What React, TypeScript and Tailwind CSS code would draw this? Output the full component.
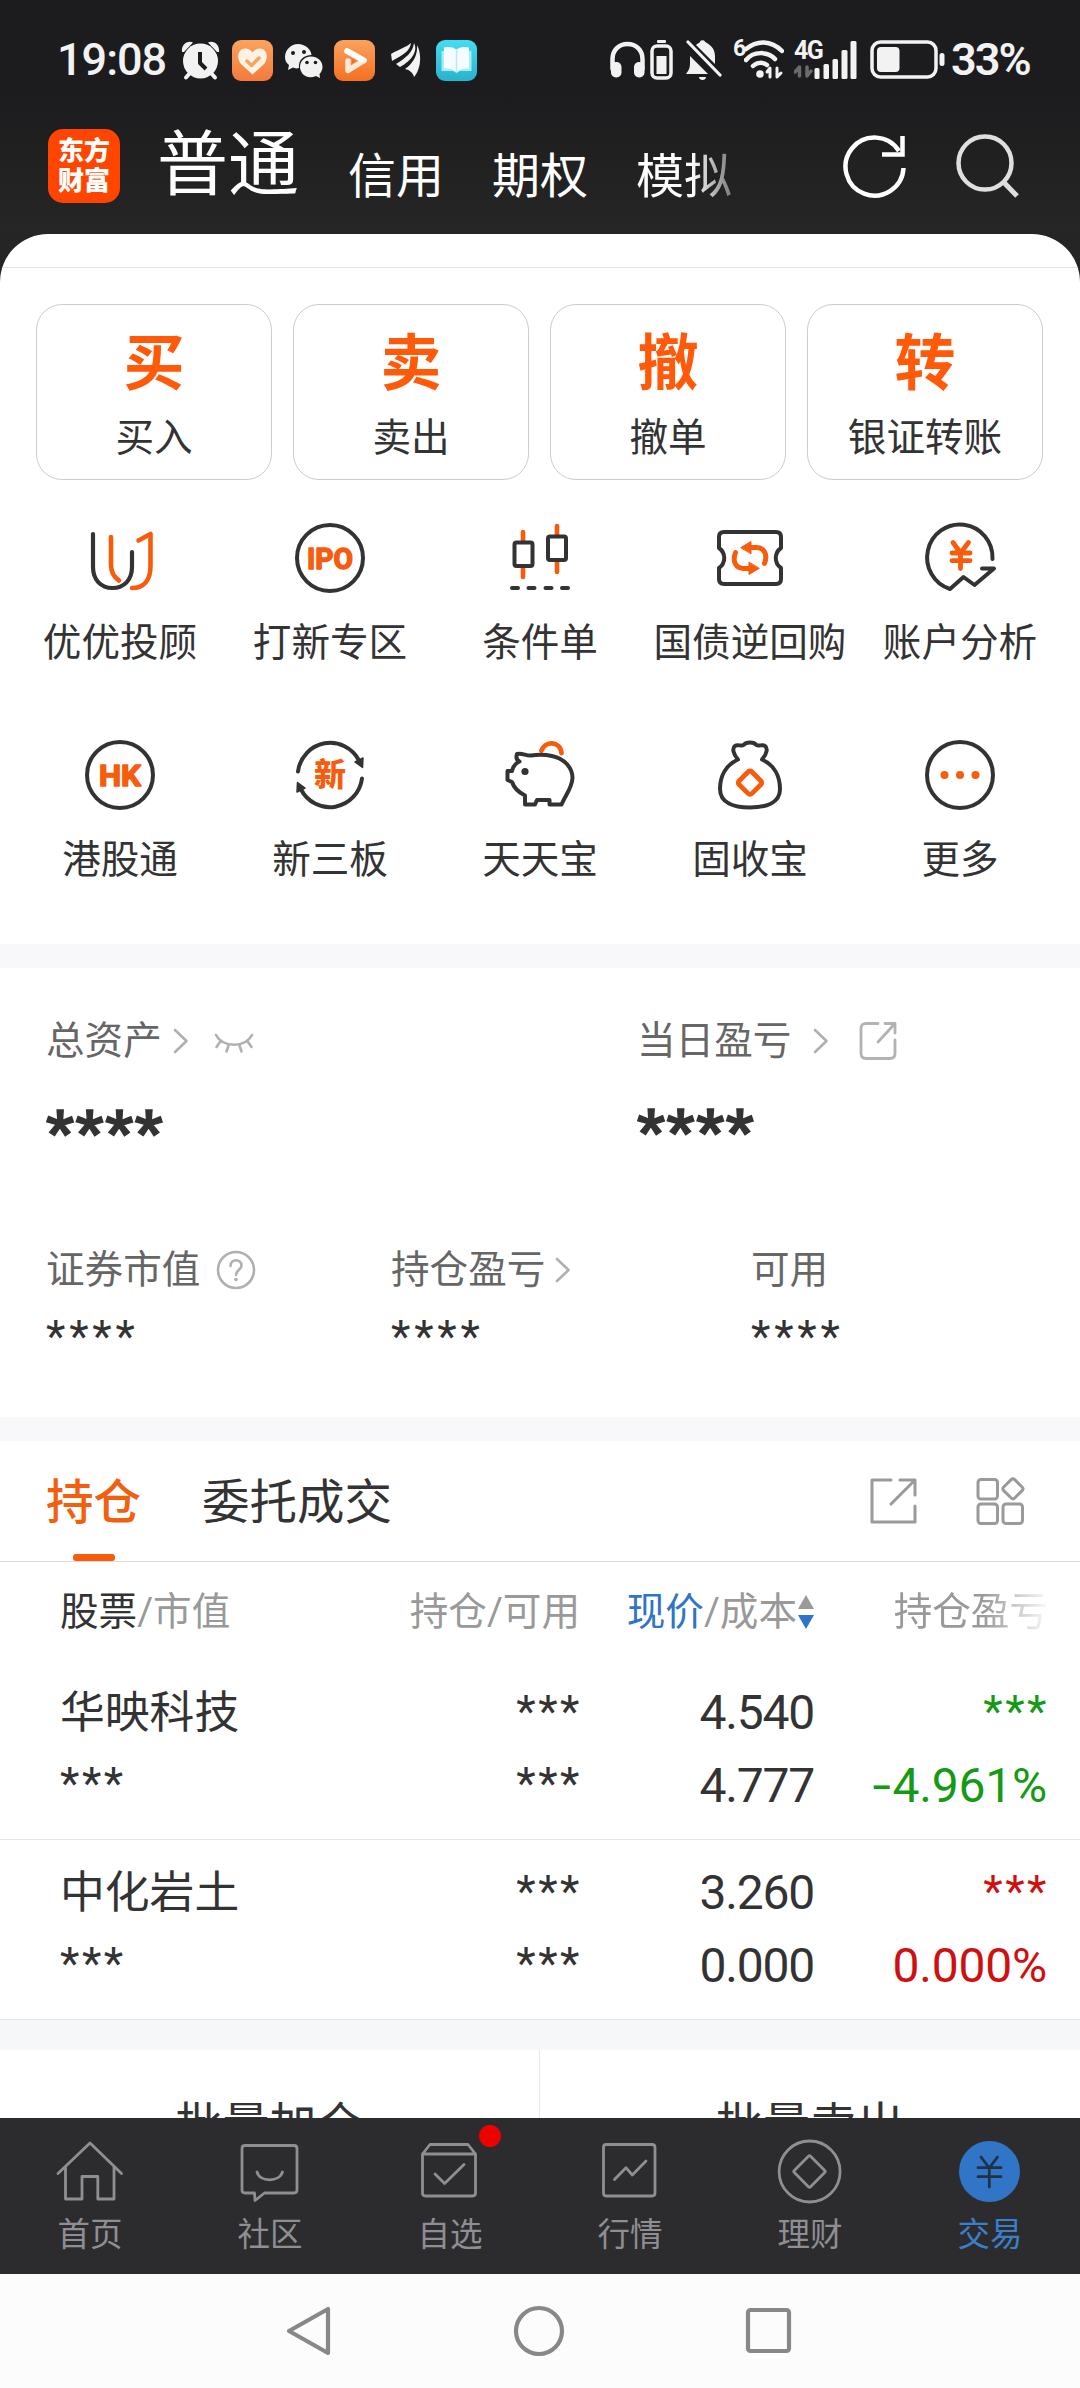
import type { ReactNode } from "react";
import clsx from "clsx";

const INK = "#333333";
const ORANGE = "#f75c0c";

const ACCOUNT_TABS = ["信用", "期权"];

const QUICK_ACTIONS = [
  { glyph: "买", label: "买入" },
  { glyph: "卖", label: "卖出" },
  { glyph: "撤", label: "撤单" },
  { glyph: "转", label: "银证转账" }
];

const HOLDINGS = [
  { name: "华映科技", price: "4.540", cost: "4.777", sign: "-", rate: "4.961%", tone: "text-[#149a14]" },
  { name: "中化岩土", price: "3.260", cost: "0.000", sign: "", rate: "0.000%", tone: "text-[#cf1010]" }
];

function Svg({ w, h, className, children }: { w: number; h: number; className?: string; children: ReactNode }) {
  return (
    <svg
      width={w}
      height={h}
      viewBox={`0 0 ${w} ${h}`}
      fill="none"
      strokeLinecap="round"
      strokeLinejoin="round"
      className={clsx("block shrink-0", className)}
      aria-hidden
    >
      {children}
    </svg>
  );
}

function StatusBar() {
  return (
    <div className="flex h-[120px] items-center pl-[57px] text-[#f2f2f2]">
      <span className="w-[124px] text-[45px] font-medium leading-[46px] tracking-[-1px]">19:08</span>

      <Svg w={40} h={42}>
        <g fill="#f2f2f2">
          <circle cx="19.5" cy="22" r="17.5" />
          <path d="M1 13C0 5 7 1 12 3.500L3 13ZM38 13C39 5 32 1 27 3.500L36 13Z" />
        </g>
        <path d="M9 34L5 38.500M30 34L34 38.500" stroke="#f2f2f2" strokeWidth="4" />
        <path d="M19 13V24L25 30" stroke="#1c1c1e" strokeWidth="4" strokeLinecap="butt" />
      </Svg>

      <Svg w={41} h={41} className="ml-[11px]">
        <defs>
          <linearGradient id="warm" x1="0" y1="0" x2="0" y2="1">
            <stop stopColor="#fca35c" />
            <stop offset="1" stopColor="#f47a3c" />
          </linearGradient>
        </defs>
        <rect width="41" height="41" rx="9" fill="url(#warm)" />
        <path d="M20.500 34.500L9 24C4 18 6 9 13 8.500C17 8.500 19.500 11 20.500 12.500C21.500 11 24 8.500 28 8.500C35 9 37 18 32 24Z" fill="#fff3e6" />
        <path d="M15 21L19.500 25.500L27 18" stroke="#f9a35c" strokeWidth="3.500" />
      </Svg>

      <Svg w={40} h={36} className="ml-[11px]">
        <g fill="#f2f2f2">
          <path d="M14 2C21 2 27 7 27.500 13C20 13 14 18 15 26C12 27 10 26 9 25.500L4 28L5 23C2 21 1 18 1 15C1 8 7 2 14 2Z" />
          <path d="M27 14.500C33.500 14.500 38.500 19 38.500 25C38.500 28 37 30.500 35.500 32L36 36L32 34C22 38 16 31 16 25C16 19 21 14.500 27 14.500Z" />
        </g>
        <g fill="#1c1c1e">
          <circle cx="9" cy="11" r="2" />
          <circle cx="20" cy="10" r="2" />
          <circle cx="23" cy="20.500" r="1.800" />
          <circle cx="31.500" cy="20.500" r="1.800" />
        </g>
      </Svg>

      <Svg w={41} h={41} className="ml-[10px]">
        <defs>
          <linearGradient id="hot" x1="0" y1="0" x2="0" y2="1">
            <stop stopColor="#fba260" />
            <stop offset="1" stopColor="#f5701f" />
          </linearGradient>
        </defs>
        <rect width="41" height="41" rx="9" fill="url(#hot)" />
        <path d="M13 11L30 20.500L14 30.500V21" stroke="#ffe9d8" strokeWidth="5.500" />
        <path d="M13 11L30 20.500" stroke="#ffffff" strokeWidth="5.500" />
        <path d="M18 18.500L22 21L18 23.500Z" fill="#f5701f" />
      </Svg>

      <Svg w={30} h={36} className="ml-[16px]">
        <g fill="#f2f2f2">
          <path d="M0 12C8 7 14 6 20 1C19 9 12 13 1 19Z" />
          <path d="M5 22C15 16 22 10 23 1C27 8 22 18 9 25Z" />
          <path d="M14 27C21 22 27 14 26 3C31 12 30 27 23 35C22 31 19 28 14 27Z" />
        </g>
      </Svg>

      <Svg w={41} h={41} className="ml-[15px]">
        <defs>
          <linearGradient id="aqua" x1="0" y1="0" x2="0" y2="1">
            <stop stopColor="#45dcf2" />
            <stop offset="1" stopColor="#26b4cb" />
          </linearGradient>
        </defs>
        <rect width="41" height="41" rx="9" fill="url(#aqua)" />
        <path d="M5.500 11H35.500V31H24L20.500 33L17 31H5.500Z" fill="#a8ebf4" />
        <path d="M20.500 9.500C17 6.500 12 6.500 8 7.500V28.500C13 28 17 29 20.500 32C24 29 28 28 33 28.500V7.500C29 6.500 24 6.500 20.500 9.500Z" fill="#f4fcff" />
        <path d="M20.500 9.500V32" stroke="#bfe6f2" strokeWidth="1.500" />
      </Svg>

      <Svg w={36} h={38} className="ml-[133px]">
        <path d="M2.500 28V18C2.500 9 9 3 17.500 3S32.500 9 32.500 18V28" stroke="#f2f2f2" strokeWidth="4.500" />
        <rect x="1" y="21" width="10.500" height="15.500" rx="5" fill="#f2f2f2" />
        <rect x="24" y="21" width="10.500" height="15.500" rx="5" fill="#f2f2f2" />
      </Svg>
      <Svg w={23} h={42} className="ml-[4px]">
        <rect x="7" y="1" width="9" height="3" rx="1" fill="#f2f2f2" />
        <rect x="2" y="7" width="19" height="32" rx="5" stroke="#f2f2f2" strokeWidth="3.500" />
        <rect x="6.500" y="17" width="10" height="18" fill="#f2f2f2" />
      </Svg>
      <Svg w={36} h={42} className="ml-[13px]">
        <g fill="#f2f2f2">
          <path d="M0 35C3 31 4 29 4 24V17L22 35Z" />
          <path d="M10 6C12 4 14 4 14 2.500A3 3 0 0 1 19 2.500C19 4 29 6 29 17V25Z" />
          <path d="M13 38H20C20 42 13 42 13 38Z" />
        </g>
        <path d="M2 3L34 36" stroke="#f2f2f2" strokeWidth="3.200" />
      </Svg>
      <div className="ml-[11px] flex h-[42px] w-[52px] items-start">
        <span className="w-[11px] text-[23px] font-bold leading-[20px]">6</span>
        <Svg w={40} h={42}>
          <g stroke="#f2f2f2" strokeWidth="4.500">
            <path d="M2 10C13 1 27 1 38 12" />
            <path d="M2 21C9 12 24 12 31 20" />
            <path d="M9 27C13 23 19 23 23 26" />
          </g>
          <circle cx="16" cy="35" r="3.800" fill="#f2f2f2" />
          <path d="M26 38V29L23 33M33 29V38L37 34" stroke="#f2f2f2" strokeWidth="3" />
        </Svg>
      </div>
      <div className="ml-[9px] flex h-[42px] w-[63px] items-start">
        <div className="w-[20px]">
          <div className="text-[25px] font-bold leading-[24px] tracking-[-1.5px]">4G</div>
          <Svg w={19} h={18}>
            <path d="M5.500 13V4L1 9M13 4V13L17 8" stroke="#6a6a6c" strokeWidth="3.500" />
          </Svg>
        </div>
        <Svg w={43} h={42}>
          <g fill="#f2f2f2">
            <rect x="0.500" y="29" width="5" height="11" rx="1.500" />
            <rect x="9.500" y="25" width="5.500" height="15" rx="1.500" />
            <rect x="18.500" y="20" width="5.500" height="20" rx="1.500" />
            <rect x="27.500" y="11" width="6" height="29" rx="1.500" />
            <rect x="36.500" y="2" width="6" height="38" rx="1.500" />
          </g>
        </Svg>
      </div>
      <Svg w={76} h={40} className="ml-[13px]">
        <rect x="2" y="2" width="64" height="35" rx="8.500" stroke="#f2f2f2" strokeWidth="3.500" />
        <rect x="7" y="7" width="22.500" height="25" rx="4" fill="#f2f2f2" />
        <rect x="69.500" y="13" width="5" height="13" rx="2.500" fill="#f2f2f2" />
      </Svg>
      <span className="ml-[5px] text-[45px] font-semibold leading-[46px] tracking-[-2px]">33%</span>
    </div>
  );
}

function Header() {
  return (
    <div className="flex h-[92px] items-center pl-[48px] text-white">
      <div className="flex h-[74px] w-[72px] flex-col items-center justify-center rounded-[15px] bg-[#ff4500] text-[26px] font-black leading-[30px]">
        <span>东方</span>
        <span>财富</span>
      </div>
      <span className="mb-[2px] ml-[37px] text-[71px] leading-[72px]">普通</span>
      <div className="ml-[49px] flex gap-[48px] pt-[21px] text-[48px] leading-[48px]">
        {ACCOUNT_TABS.map((tab) => (
          <span key={tab}>{tab}</span>
        ))}
        <span className="[mask-image:linear-gradient(90deg,#000_58%,rgba(0,0,0,0.4)_100%)]">模拟</span>
      </div>
      <Svg w={66} h={68} className="ml-[110px]">
        <path d="M61.500 36A29 29 0 1 1 57 19" stroke="#ffffff" strokeWidth="4.500" strokeLinecap="butt" />
        <path d="M60.500 4V22.500H40" stroke="#ffffff" strokeWidth="4.500" strokeLinecap="butt" strokeLinejoin="miter" />
      </Svg>
      <Svg w={66} h={68} className="ml-[46px]">
        <circle cx="31" cy="31" r="26.500" stroke="#dfdfdf" strokeWidth="4.500" />
        <path d="M49.500 50L63 64" stroke="#dfdfdf" strokeWidth="5" strokeLinecap="butt" />
      </Svg>
    </div>
  );
}

function QuickActions() {
  return (
    <div className="flex gap-[21px] px-[36px] pt-[36px]">
      {QUICK_ACTIONS.map((action) => (
        <div
          key={action.label}
          className="flex h-[176px] w-[236px] flex-col items-center rounded-[26px] border border-[#cccccc] pt-[26px]"
        >
          <span className="text-[61px] font-bold leading-[66px] text-[#ff5a0a]">{action.glyph}</span>
          <span className="mt-[21px] text-[38.6px] leading-[40px]">{action.label}</span>
        </div>
      ))}
    </div>
  );
}

const RING = <circle cx="40" cy="40" r="33" stroke={INK} strokeWidth="4" />;

function IconAdvisor() {
  return (
    <Svg w={80} h={80}>
      <g strokeWidth="4.200">
        <path d="M13 16V49C13 62 21 70 32.500 70S52 62 52 49V34" stroke={INK} />
        <path d="M31 19V47C31 55 34 59 39 62.500M58.500 22.500L70.500 16V48C70.500 62 64 70 52 70" stroke={ORANGE} strokeWidth="4.600" />
      </g>
    </Svg>
  );
}

function IconRingText({ text, span }: { text: string; span: number }) {
  return (
    <Svg w={80} h={80}>
      {RING}
      <text
        x="40"
        y="50.500"
        textAnchor="middle"
        fontSize="30"
        fontWeight="700"
        textLength={span}
        lengthAdjust="spacingAndGlyphs"
        fill={ORANGE}
        stroke={ORANGE}
        strokeWidth="1.500"
      >
        {text}
      </text>
    </Svg>
  );
}

function IconCandles() {
  return (
    <Svg w={80} h={80}>
      <path d="M23 14V24M23 50V59M57 8V18M57 44V54" stroke={ORANGE} strokeWidth="4.600" />
      <g stroke={INK} strokeWidth="4">
        <rect x="14.500" y="24.500" width="18" height="23.500" rx="2" />
        <rect x="48" y="18.500" width="18" height="23.500" rx="2" />
        <path d="M12 70H18M28.500 70H34.500M45.500 70H51.500M62 70H68" />
      </g>
    </Svg>
  );
}

function IconRepo() {
  const arrow = (
    <>
      <path d="M40 29.500H46C54 29.500 58 36 54.500 45.500" stroke={ORANGE} strokeWidth="5" />
      <path d="M31 29.500L41 23.500V35.500Z" fill={ORANGE} stroke={ORANGE} strokeWidth="1" />
    </>
  );
  return (
    <Svg w={80} h={80}>
      <path
        d="M14 14H66Q71 14 71 19V30C64 35 64 45 71 50V61Q71 66 66 66H14Q9 66 9 61V50C16 45 16 35 9 30V19Q9 14 14 14Z"
        stroke={INK}
        strokeWidth="4"
      />
      {arrow}
      <g transform="rotate(180 40 40)">{arrow}</g>
    </Svg>
  );
}

function IconAnalysis() {
  return (
    <Svg w={80} h={80}>
      <path d="M72.500 41A32.700 33 0 1 0 30 71L43.500 59L54.500 67L74 50.500H62" stroke={INK} strokeWidth="4" />
      <path d="M33 24.500L40.500 35L48.500 24.500M32 35H50M32 42.700H50M40.500 35V50.500" stroke={ORANGE} strokeWidth="4.800" />
    </Svg>
  );
}

function IconNewBoard() {
  const half = (
    <>
      <path d="M8 36.500A32.500 33 0 0 1 69 25.500" stroke={INK} strokeWidth="4" />
      <path d="M65 27L73 23L72.500 32.500Z" fill={INK} stroke={INK} strokeWidth="1.500" />
    </>
  );
  return (
    <Svg w={80} h={80}>
      {half}
      <g transform="rotate(180 40 40)">{half}</g>
      <text x="40" y="51" textAnchor="middle" fontSize="32" fontWeight="900" fill={ORANGE}>
        新
      </text>
    </Svg>
  );
}

function IconPig() {
  return (
    <Svg w={80} h={80}>
      <path d="M41.500 15.500C45 5.500 60 5.500 61.500 18" stroke={ORANGE} strokeWidth="4.800" />
      <path
        d="M17 19C22 17.500 26 21 31 20.500C38 19.500 45 19.500 52 21C66 24 72.500 34 72.500 43C72 53 66 59 61.500 69.500H49.500V65H37L35 69.500H25V60.500C18 57 14 53 12 47L7.500 45V36H12C13 32 16 28 19.500 26.500C16.500 25 16 22 17 19Z"
        stroke={INK}
        strokeWidth="4"
      />
      <circle cx="25" cy="36.500" r="3.600" fill={INK} />
    </Svg>
  );
}

function IconBag() {
  return (
    <Svg w={80} h={80}>
      <path
        d="M28 24.500C23 19 22 13 25 11C28 8.500 31 12 33.500 10C36 6.500 44 6.500 46.500 10C49 12 52 8.500 55 11C58 13 57 19 52 24.500C64 30 70 41 70 54C70 68 56 72.500 40 72.500S10 68 10 54C10 41 16 30 28 24.500Z"
        stroke={INK}
        strokeWidth="4"
      />
      <rect x="31" y="38.700" width="18" height="18" rx="2.500" transform="rotate(45 40 47.700)" stroke={ORANGE} strokeWidth="4.800" />
    </Svg>
  );
}

function IconMore() {
  return (
    <Svg w={80} h={80}>
      {RING}
      <g fill={ORANGE}>
        <circle cx="24.500" cy="40" r="4" />
        <circle cx="40" cy="40" r="4" />
        <circle cx="55.500" cy="40" r="4" />
      </g>
    </Svg>
  );
}

const FEATURES: { label: string; icon: ReactNode }[] = [
  { label: "优优投顾", icon: <IconAdvisor /> },
  { label: "打新专区", icon: <IconRingText text="IPO" span={46} /> },
  { label: "条件单", icon: <IconCandles /> },
  { label: "国债逆回购", icon: <IconRepo /> },
  { label: "账户分析", icon: <IconAnalysis /> },
  { label: "港股通", icon: <IconRingText text="HK" span={42} /> },
  { label: "新三板", icon: <IconNewBoard /> },
  { label: "天天宝", icon: <IconPig /> },
  { label: "固收宝", icon: <IconBag /> },
  { label: "更多", icon: <IconMore /> }
];

function FeatureGrid() {
  return (
    <div className="grid grid-cols-5 px-[15px] pt-[38px]">
      {FEATURES.map((feature) => (
        <div key={feature.label} className="flex h-[217px] flex-col items-center">
          {feature.icon}
          <span className="mt-[25px] whitespace-nowrap text-[38.6px] leading-[40px]">{feature.label}</span>
        </div>
      ))}
    </div>
  );
}

function Chevron({ className }: { className?: string }) {
  return (
    <Svg w={16} h={26} className={className}>
      <path d="M2 2L13.500 13L2 24" stroke="#b0b0b0" strokeWidth="2.600" />
    </Svg>
  );
}

function Masked({ className }: { className?: string }) {
  return <div className={clsx("text-[#333]", className)}>****</div>;
}

function Assets() {
  return (
    <div className="h-[449px] bg-white pt-[53px] text-[38.6px] leading-[40px] text-[#666]">
      <div className="flex">
        <div className="w-[591px] pl-[46px]">
          <div className="flex h-[40px] items-center">
            总资产
            <Chevron className="ml-[11px]" />
            <Svg w={40} h={22} className="ml-[25px] mt-[4px]">
              <path d="M2 3C9 16 31 16 38 3M6 10L2.500 15M14.500 13.500L12.500 19.500M25.500 13.500L27.500 19.500M34 10L37.500 15" stroke="#b0b0b0" strokeWidth="2.600" />
            </Svg>
          </div>
          <Masked className="mt-[41px] text-[60px] font-extrabold leading-[60px] tracking-[2px] [-webkit-text-stroke:1.5px_#333]" />
        </div>
        <div className="pl-[46px]">
          <div className="flex h-[40px] items-center">
            当日盈亏
            <Chevron className="ml-[22px]" />
            <Svg w={38} h={40} className="ml-[30px]">
              <path d="M19 2.500H7Q2 2.500 2 7.500V32.500Q2 37.500 7 37.500H31Q36 37.500 36 32.500V19M26 2.500H36V12M35.500 3L19 21" stroke="#b3b3b3" strokeWidth="2.800" />
            </Svg>
          </div>
          <Masked className="mt-[40px] text-[60px] font-extrabold leading-[60px] tracking-[2px] [-webkit-text-stroke:1.5px_#333]" />
        </div>
      </div>

      <div className="mt-[88px] flex">
        <div className="w-[345px] pl-[46px]">
          <div className="flex h-[40px] items-center">
            证券市值
            <Svg w={40} h={40} className="ml-[16px]">
              <circle cx="20" cy="20" r="18" stroke="#b0b0b0" strokeWidth="2.600" />
              <path d="M14.500 16C14.500 8.500 25.500 8.500 25.500 15.500C25.500 19.500 20 20 20 25" stroke="#b0b0b0" strokeWidth="2.600" />
              <circle cx="20" cy="29.500" r="1.800" fill="#b0b0b0" />
            </Svg>
          </div>
          <Masked className="mt-[24px] text-[45px] leading-[46px] tracking-[3.8px]" />
        </div>
        <div className="w-[360px] pl-[46px]">
          <div className="flex h-[40px] items-center">
            持仓盈亏
            <Chevron className="ml-[10px]" />
          </div>
          <Masked className="mt-[24px] text-[45px] leading-[46px] tracking-[3.8px]" />
        </div>
        <div className="pl-[46px]">
          <div className="h-[40px]">可用</div>
          <Masked className="mt-[24px] text-[45px] leading-[46px] tracking-[3.8px]" />
        </div>
      </div>
    </div>
  );
}

function Holdings() {
  return (
    <div className="bg-white">
      <div className="flex h-[121px] items-start border-b border-[#dcdcdc] pl-[46px] pt-[38px] text-[47.5px] leading-[48px]">
        <div className="flex h-[82px] flex-col items-center justify-between font-medium text-[#f0600f]">
          持仓
          <span className="h-[7px] w-[42px] rounded-[3px] bg-[#f75c0c]" />
        </div>
        <span className="ml-[61px]">委托成交</span>
        <Svg w={50} h={48} className="-mt-[2px] ml-[477px]">
          <path d="M22 3H3V45H46V29M31 3H46V18M45 4L22 27" stroke="#9a9a9a" strokeWidth="3" />
        </Svg>
        <Svg w={50} h={48} className="-mt-[2px] ml-[57px]">
          <g stroke="#9a9a9a" strokeWidth="3">
            <rect x="2" y="2.500" width="19.500" height="19.500" rx="3" />
            <rect x="2" y="27" width="19.500" height="19.500" rx="3" />
            <rect x="27" y="27" width="19.500" height="19.500" rx="3" />
            <rect x="29" y="4" width="15.500" height="15.500" rx="2.500" transform="rotate(45 36.750 12)" />
          </g>
        </Svg>
      </div>

      <div className="grid h-[98px] grid-cols-[300px_220px_235px_233px] items-center pl-[60px] pt-px text-[38.6px] leading-[40px] text-[#999]">
        <span>
          <span className="text-[#333]">股票</span>/市值
        </span>
        <span className="text-right">持仓/可用</span>
        <span className="flex items-center justify-end whitespace-nowrap">
          <span className="text-[#2f74c8]">现价</span>/成本
          <Svg w={18} h={36}>
            <path d="M9 1L17 15H1Z" fill="#9a9a9a" />
            <path d="M9 35L17 21H1Z" fill="#2f74c8" />
          </Svg>
        </span>
        <span className="whitespace-nowrap text-right [mask-image:linear-gradient(90deg,#000_72%,rgba(0,0,0,0.12)_98%)]">持仓盈亏</span>
      </div>

      {HOLDINGS.map((row) => (
        <div
          key={row.name}
          className="grid h-[180px] grid-cols-[300px_222px_232px_235px] content-start border-b border-[#e6e6e8] pl-[60px] pt-[16px] text-[48px] leading-[73px] tracking-[-1.200px]"
        >
          <span className="pt-px text-[44.8px] leading-[72px] tracking-normal">{row.name}</span>
          <span className="text-right text-[45px] leading-[71px] tracking-[2.5px]">***</span>
          <span className="text-right">{row.price}</span>
          <span className={clsx("text-right text-[45px] leading-[71px] tracking-[2.5px]", row.tone)}>***</span>
          <span className="text-[45px] leading-[70px] tracking-[2.5px]">***</span>
          <span className="text-right text-[45px] leading-[70px] tracking-[2.5px]">***</span>
          <span className="text-right">{row.cost}</span>
          <span className={clsx("pr-[2px] text-right tracking-[-0.2px]", row.tone)}>
            {row.sign ? <span className="mr-[4px] inline-block scale-x-140">{row.sign}</span> : null}
            {row.rate}
          </span>
        </div>
      ))}

      <div className="h-[30px] bg-[#f6f7f9]" />
      <div className="flex h-[68px] overflow-hidden text-center text-[47px] leading-[48px]">
        <span className="w-[540px] border-r border-[#e8e8e8] pt-[51px]">批量加仓</span>
        <span className="w-[540px] pt-[51px]">批量卖出</span>
      </div>
    </div>
  );
}

const TABS: { label: string; active?: boolean; badge?: boolean; icon: ReactNode }[] = [
  {
    label: "首页",
    icon: <path d="M4 37.500L36 7L67.500 37.500M11.500 31V63H28V40.500H43.800V63H60V31" />
  },
  {
    label: "社区",
    icon: <path d="M11 9.500H60Q63 9.500 63 12.500V54Q63 57 60 57H30.500L21 64.500L20.500 57H11Q8 57 8 54V12.500Q8 9.500 11 9.500ZM23 36C26 46.500 45 46.500 48.500 36" />
  },
  {
    label: "自选",
    badge: true,
    icon: <path d="M8.500 18L16 8.500H54L61.500 18V57Q61.500 60 58.500 60H11.500Q8.500 60 8.500 57ZM8.500 18H61.500M21 38L30.600 47.500L50 28.600" />
  },
  {
    label: "行情",
    icon: <path d="M12 8.500H58Q61 8.500 61 11.500V57Q61 60 58 60H12Q9.500 60 9.500 57V11.500Q9.500 8.500 12 8.500ZM20.500 43.500L32 31.700L38.300 39L52 25" />
  },
  {
    label: "理财",
    icon: (
      <>
        <circle cx="35.600" cy="35.500" r="30.500" />
        <rect x="24" y="24" width="23" height="23" rx="1.500" transform="rotate(45 35.500 35.500)" />
      </>
    )
  },
  {
    label: "交易",
    active: true,
    icon: (
      <>
        <circle cx="35.500" cy="35.500" r="30.500" fill="#3176c6" stroke="none" />
        <path d="M27 21L35.300 32L43.500 21M24 31.700H47M24 40.700H47M35.300 32V51" stroke="#1f3247" />
      </>
    )
  }
];

function TabBar() {
  return (
    <div className="grid h-[156px] grid-cols-6 bg-[#2c2c2e] pt-[18px]">
      {TABS.map((tab) => (
        <div
          key={tab.label}
          className={clsx("relative flex flex-col items-center", tab.active ? "text-[#3b7fcb]" : "text-[#8e8e93]")}
        >
          <Svg w={72} h={72}>
            <g stroke="currentColor" strokeWidth="2.800">
              {tab.icon}
            </g>
          </Svg>
          <span className="mt-[10px] text-[32.500px] leading-[34px]">{tab.label}</span>
          {tab.badge ? <span className="absolute left-[119px] top-[-11px] size-[22px] rounded-full bg-[#ee0000]" /> : null}
        </div>
      ))}
    </div>
  );
}

function SystemNav() {
  return (
    <div className="flex h-[114px] items-center justify-center bg-[#fcfcfc] pr-[3px]">
      <Svg w={50} h={56}>
        <path d="M45 6V50L6 28Z" stroke="#888888" strokeWidth="4.200" />
      </Svg>
      <Svg w={52} h={56} className="ml-[180px]">
        <circle cx="26" cy="28" r="23" stroke="#888888" strokeWidth="4.200" />
      </Svg>
      <Svg w={50} h={56} className="ml-[179px]">
        <rect x="4" y="7" width="41" height="41" rx="2.500" stroke="#888888" strokeWidth="4.200" />
      </Svg>
    </div>
  );
}

export default function App() {
  return (
    <div className="flex h-[2388px] w-[1080px] flex-col overflow-hidden bg-white font-['Roboto','Noto_Sans_CJK_SC',sans-serif] text-[#333]">
      <div className="bg-[#252525]">
        <div className="h-[234px] bg-linear-to-b from-[#1c1c1e] from-40% to-[#262626]">
          <StatusBar />
          <Header />
        </div>
        <div className="h-[710px] overflow-hidden rounded-t-[48px] bg-white">
          <div className="h-[34px] border-b border-[#e2e2e2]" />
          <QuickActions />
          <FeatureGrid />
        </div>
      </div>
      <div className="h-[24px] bg-[#f8f8fa]" />
      <Assets />
      <div className="h-[24px] bg-[#f8f8fa]" />
      <Holdings />
      <TabBar />
      <SystemNav />
    </div>
  );
}
